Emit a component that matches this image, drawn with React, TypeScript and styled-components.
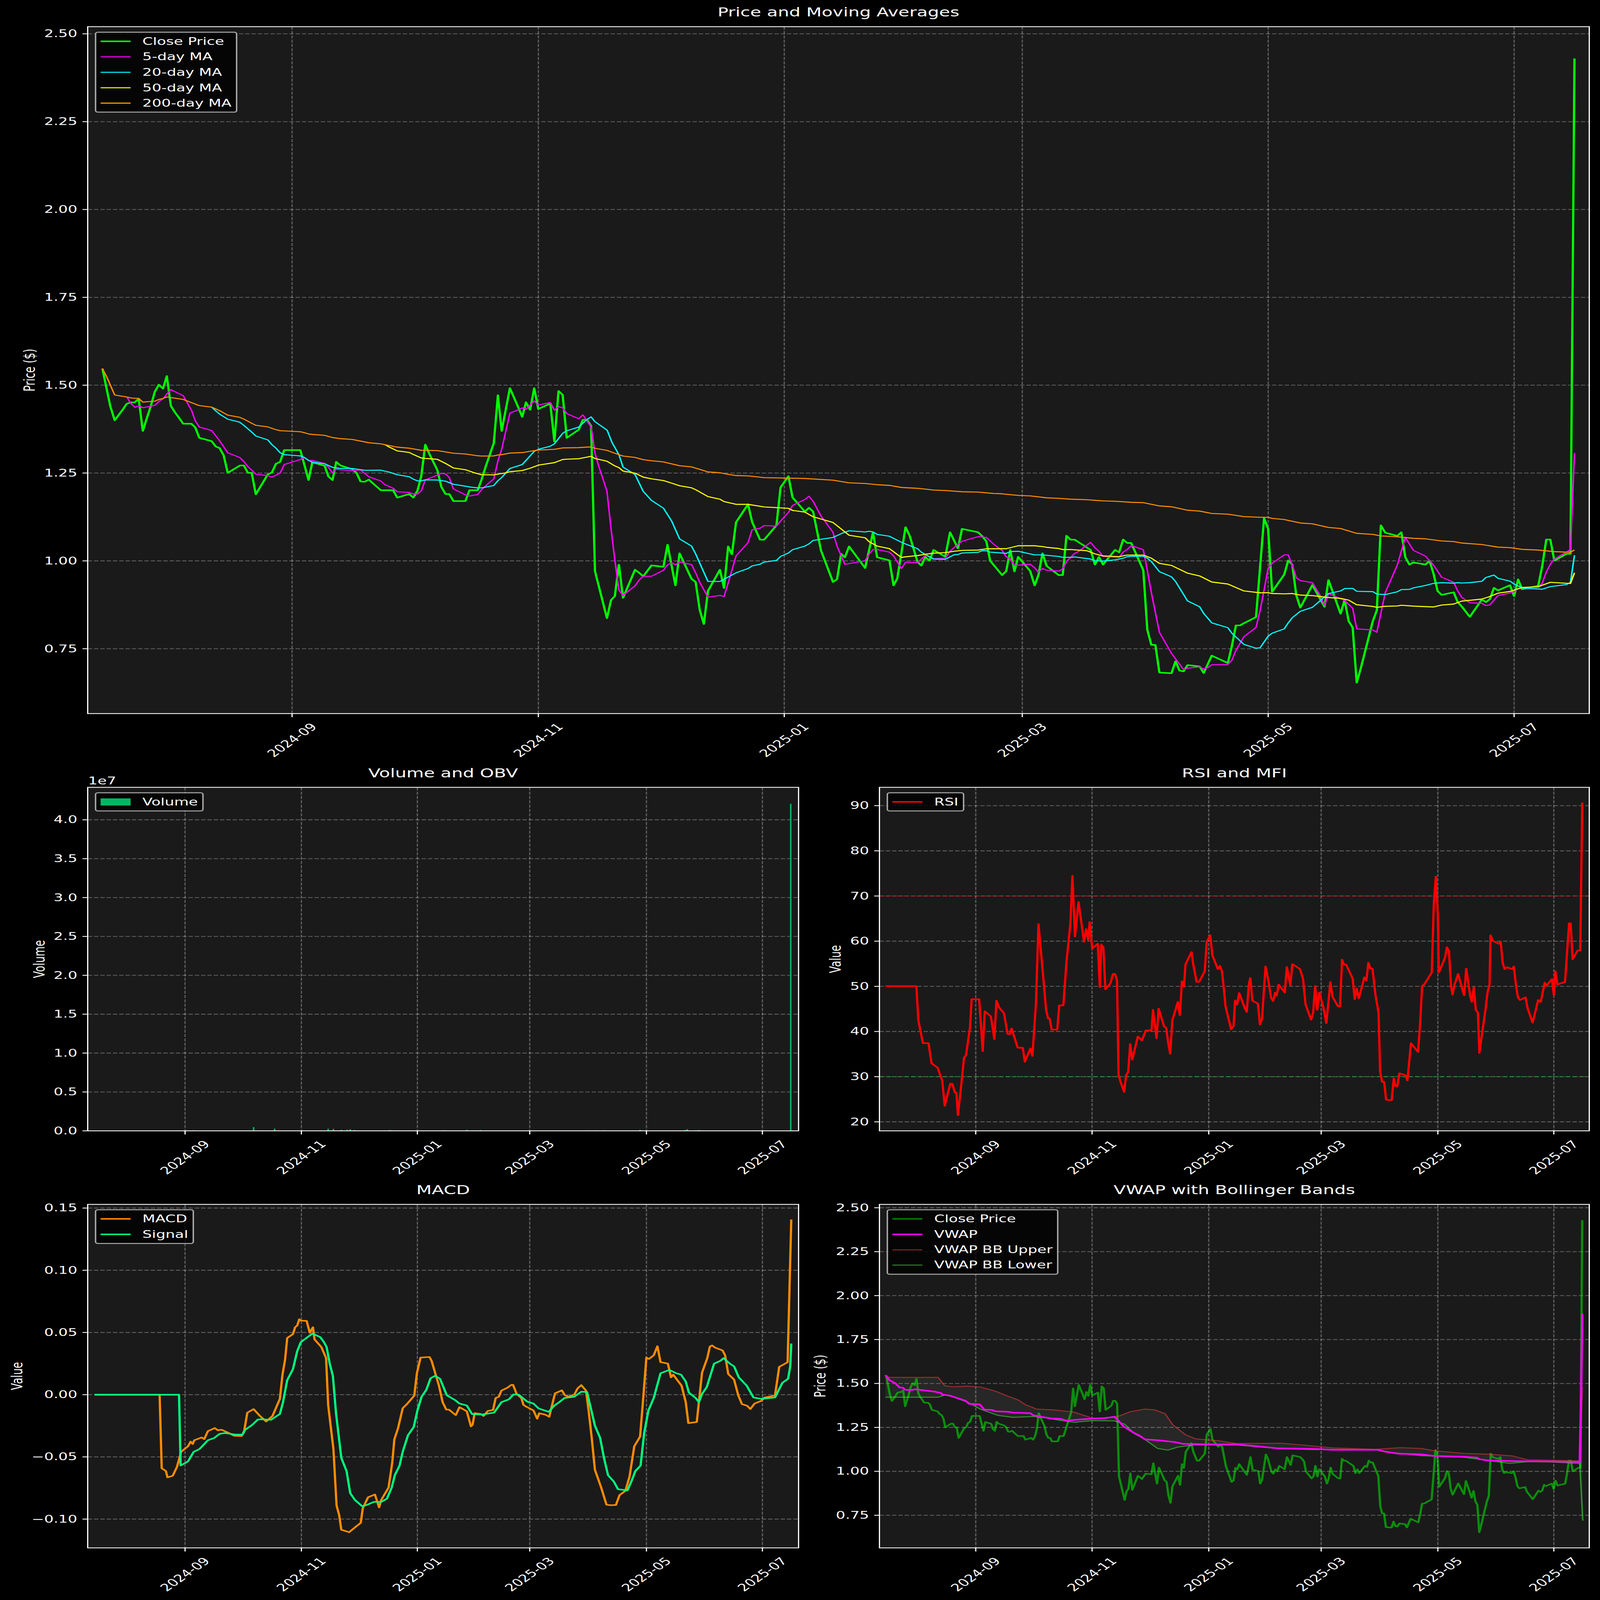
import { ReactNode } from "react";
import styled, { createGlobalStyle } from "styled-components";

type Pt = [number, number];
type Crop = [number, number, number, number];

const GlobalStyle = createGlobalStyle`
  body {
    margin: 0;
    background: #000;
    overflow: hidden;
  }
`;

// series are traced off the chart, "x,y" pairs inside a crop, turned into figure pixels here
const trace = (raw: string, [ox, sx, oy, sy]: Crop): Pt[] =>
  raw
    .trim()
    .split(/\s+/)
    .map((p) => {
      const [x, y] = p.split(",").map(Number);
      return [ox + x / sx, oy + y / sy] as Pt;
    });

const toPoints = (pts: Pt[]) => pts.map(([x, y]) => `${x.toFixed(1)},${y.toFixed(1)}`).join(" ");

const A: Crop = [200, 1.0453, 1400, 1.568];
const B: Crop = [1600, 1.0453, 1800, 1.4255];
const C: Crop = [3000, 1.0667, 1800, 1.4255];
const RSI_CROP: Crop = [2250, 0.7063, 3050, 0.9224];
const MACD_CROP: Crop = [0, 0.6817, 4750, 0.8924];
const VWAP_CROP: Crop = [2250, 0.7063, 4750, 0.8924];

const close = [
  ...trace(
    `90,155 113,395 126,485 150,415 161,380 172,371 184,371 196,348 208,553 220,470 232,390 243,303 255,258 267,283 278,203 290,393 302,435 314,470 326,507 350,507 361,530 373,597 409,618 421,652 432,662 444,708 456,820 492,773 503,773 515,820 526,820 538,957 573,830 585,818 597,762 609,750 621,675 668,675 692,866 703,753 739,775 750,843 762,866 773,750 785,773 820,797 832,820 844,875 856,877 868,863 880,887 903,931 939,931 951,978 986,955 998,978 1010,935 1021,843 1033,640 1045,700 1068,802 1080,910 1092,955 1103,955 1115,1000 1150,1000 1162,931 1186,931 1197,865 1210,775 1233,630 1245,325 1256,553 1280,280 1304,400 1316,463 1327,370 1339,418 1351,280 1363,413 1398,378 1410,620 1422,298 1434,322 1446,597 1481,545 1493,482 1505,482 1517,520`,
    A,
  ),
  ...trace(
    `65,745 100,1018 112,913 123,890 135,708 147,900 182,737 194,755 206,775 230,712 265,720 277,592 300,828 312,642 347,790 359,808 371,970 383,1052 395,860 430,737 442,843 454,602 465,647 477,462 512,358 524,460 547,563 559,563 595,480 607,260 630,195 642,318 678,400 690,378 702,400 725,625 760,808 772,792 784,645 795,665 807,602 854,727 877,520 889,665 925,683 937,828 948,787 972,490 984,540 1007,692 1018,713 1030,663 1042,685 1054,622 1088,662 1102,520 1125,613 1137,500 1184,520 1196,543 1208,572 1219,685 1254,768 1266,745 1278,622 1290,747 1301,662 1336,745 1349,828 1360,768 1372,642 1384,715 1419,768 1431,768 1442,540 1454,563 1466,563`,
    B,
  ),
  ...trace(
    `50,622 63,707 75,663 87,707 123,622 135,636 147,562 159,582 171,582 207,740 219,1085 231,1173 243,1173 255,1333 291,1337 303,1268 315,1322 327,1326 339,1290 375,1298 387,1336 411,1235 459,1278 471,1180 483,1060 495,1060 507,1047 543,1012 567,438 579,500 591,865 627,765 639,683 651,707 663,885 675,957 711,826 747,952 759,797 795,992 807,912 819,1035 831,1072 843,1392 855,1310 891,1035 903,972 915,480 928,522 964,541 976,520 988,665 1000,707 1012,695 1048,707 1060,685 1072,760 1084,860 1096,883 1132,868 1144,925 1156,950 1180,1010 1216,910 1228,925 1240,907 1252,842 1264,857 1300,827 1312,890 1324,793 1336,850 1384,830 1396,715 1408,562 1420,562 1432,685 1468,645 1480,645 1492,-2227`,
    C,
  ),
];

const ma5 = [
  ...trace(
    `162,338 172,375 185,402 197,392 208,405 243,390 255,365 267,348 278,318 290,290 326,328 350,420 361,487 373,528 409,550 432,615 456,692 491,722 503,747 515,782 526,803 538,829 573,838 585,848 609,822 621,767 668,735 680,722 692,741 703,741 739,760 750,785 762,820 773,796 785,801 820,806 844,802 868,845 903,872 915,895 939,918 951,941 986,945 998,955 1010,955 1021,935 1033,865 1068,835 1080,823 1092,827 1103,850 1115,923 1150,960 1162,968 1186,958 1197,928 1221,880 1233,858 1245,745 1256,670 1280,440 1316,406 1327,415 1351,362 1363,388 1398,372 1410,420 1422,398 1434,405 1446,442 1481,475 1493,450 1517,527`,
    A,
  ),
  ...trace(
    `65,60 75,130 100,282 112,500 123,680 135,855 147,886 182,830 194,797 206,775 230,775 265,740 277,708 289,697 300,708 312,693 347,707 359,755 371,810 395,896 430,886 442,892 454,815 477,657 512,580 524,505 547,497 559,481 595,484 607,455 630,405 642,364 678,330 690,311 702,340 725,425 760,520 772,600 795,706 854,685 866,645 877,620 889,620 925,635 937,657 960,730 972,694 1007,696 1030,653 1054,673 1088,670 1102,630 1114,608 1137,572 1184,545 1208,550 1230,590 1254,625 1266,662 1278,675 1290,712 1336,705 1349,725 1360,750 1372,730 1384,740 1419,745 1431,732 1442,690 1466,642`,
    B,
  ),
  ...trace(
    `11,635 50,578 63,610 75,630 87,660 135,665 147,635 159,620 171,597 207,621 219,740 231,870 255,1100 291,1222 327,1316 339,1308 375,1300 387,1313 399,1305 411,1288 459,1286 471,1262 483,1205 507,1125 543,1072 555,975 567,855 579,730 591,700 627,651 639,651 651,710 663,783 675,800 711,812 735,890 747,945 759,875 795,905 807,915 831,960 843,1080 891,1086 903,1100 915,990 928,870 964,710 988,550 1012,625 1048,658 1072,710 1096,780 1132,810 1144,860 1156,897 1180,928 1216,932 1228,945 1240,940 1264,887 1300,872 1312,865 1324,845 1336,840 1384,840 1396,815 1408,750 1420,705 1432,675 1468,635 1480,620 1492,60`,
    C,
  ),
];

const ma20 = [
  ...trace(
    `410,403 421,425 432,445 456,478 491,497 503,517 527,562 538,585 573,610 585,640 597,663 609,692 621,704 668,712 680,722 692,741 703,752 739,762 762,785 785,792 820,792 856,804 903,803 927,815 951,832 986,845 998,860 1010,871 1021,871 1033,865 1068,866 1092,873 1115,893 1150,905 1162,910 1186,916 1197,916 1233,901 1245,870 1256,850 1280,792 1316,767 1351,683 1363,670 1398,650 1410,635 1434,568 1446,552 1481,528 1505,480 1517,463 1528,493 1564,548`,
    A,
  ),
  ...trace(
    `115,0 135,70 147,142 182,185 206,283 230,335 265,380 289,455 312,558 347,600 359,645 395,805 430,805 477,755 512,730 524,715 547,705 559,693 595,683 607,660 630,640 642,621 678,600 690,587 702,567 760,550 784,528 807,511 854,518 866,514 877,518 889,532 925,543 960,578 1007,615 1018,635 1054,675 1088,677 1114,650 1125,649 1137,640 1184,636 1196,627 1208,627 1219,635 1266,642 1278,632 1301,630 1336,645 1349,651 1372,651 1419,660 1431,665 1454,665 1466,663`,
    B,
  ),
  ...trace(
    `50,675 63,685 87,687 123,680 147,670 159,662 171,659 207,659 219,670 231,690 255,748 291,778 303,805 339,918 375,952 387,990 411,1045 459,1073 471,1105 507,1170 543,1192 555,1190 579,1122 591,1105 627,1080 639,1045 651,1015 675,978 711,955 759,875 795,860 807,846 831,845 843,862 891,864 903,878 928,881 964,865 976,852 1000,851 1012,842 1048,828 1072,816 1096,812 1132,815 1144,812 1156,814 1180,812 1216,804 1228,782 1252,768 1264,787 1300,803 1312,820 1336,842 1348,845 1396,850 1420,835 1468,823 1480,810 1492,653`,
    C,
  ),
];

const ma50 = [
  ...trace(
    `915,640 927,655 951,680 986,690 998,703 1021,725 1033,728 1068,734 1092,760 1115,789 1150,800 1174,818 1197,832 1233,833 1245,828 1268,820 1280,813 1316,805 1340,790 1363,771 1410,755 1434,735 1446,733 1481,730 1505,720 1517,714`,
    A,
  ),
  ...trace(
    `65,92 100,108 123,135 135,145 147,165 182,177 206,200 230,210 265,220 289,235 312,250 347,262 359,273 395,313 430,328 442,342 477,358 512,358 559,373 630,381 642,393 678,403 702,430 760,463 807,537 854,552 866,575 889,600 925,615 960,666 972,662 1007,655 1030,647 1054,641 1088,638 1114,630 1137,625 1184,623 1208,616 1266,615 1301,598 1349,598 1372,603 1384,607 1419,614 1431,620 1454,620`,
    B,
  ),
  ...trace(
    `39,627 63,645 87,657 135,661 159,652 207,652 231,670 255,700 291,712 339,757 375,773 411,808 459,820 507,860 555,871 579,870 591,875 627,877 651,875 675,884 711,887 759,898 795,903 819,913 843,940 891,950 903,955 928,949 964,947 976,943 1012,948 1072,953 1096,942 1132,936 1156,919 1216,907 1240,892 1264,873 1300,863 1336,840 1384,835 1420,810 1480,817 1492,755`,
    C,
  ),
];

const ma200 = [
  ...trace(
    `90,155 103,210 126,324 161,336 172,342 184,345 196,345 208,369 243,363 255,352 267,346 278,336 326,352 373,391 409,401 432,423 456,452 491,466 503,477 527,505 538,517 573,527 597,545 609,551 668,558 680,564 692,572 703,575 739,581 762,595 785,602 820,607 868,628 903,635 951,656 986,663 1021,676 1068,678 1115,695 1150,700 1186,711 1197,713 1233,712 1245,706 1256,704 1280,694 1316,691 1351,678 1363,675 1410,670 1434,661 1481,659`,
    A,
  ),
  ...trace(
    `50,25 65,33 100,45 123,62 147,78 182,86 206,99 230,105 265,112 289,123 312,134 347,141 371,155 395,170 430,175 454,184 477,191 512,193 559,203 630,206 678,208 760,218 807,233 854,237 889,244 925,248 960,260 1007,265 1054,275 1088,278 1137,285 1184,287 1230,295 1254,297 1301,306 1336,309 1384,320 1419,323 1454,328`,
    B,
  ),
  ...trace(
    `39,331 87,338 123,340 171,346 207,348 255,367 291,372 339,392 375,397 411,411 459,415 507,429 555,433 579,433 591,439 627,446 675,466 711,471 759,492 795,498 843,526 891,532 915,541 964,546 1012,555 1048,558 1096,570 1132,574 1156,582 1216,591 1264,606 1300,609 1336,619 1384,623 1432,632 1480,636 1492,622`,
    C,
  ),
];

const rsi = trace(
  `158,886 219,886 223,1015 232,1100 243,1100 249,1175 261,1192 270,1240 275,1335 286,1252 290,1252 295,1285 298,1285 301,1370 308,1250 313,1155 317,1145 325,1040 328,935 343,935 350,1130 354,980 366,1000 373,1085 377,940 382,965 392,988 399,1065 403,1067 407,1045 419,1117 429,1117 433,1170 444,1120 448,1148 455,950 460,653 467,800 475,975 479,1007 482,1007 486,1049 497,1049 501,958 509,958 515,800 523,650 527,472 532,700 539,570 547,680 550,720 554,672 558,712 561,645 566,745 577,727 581,890 584,730 588,740 592,898 602,875 607,840 611,840 615,865 618,1220 622,1245 629,1283 633,1220 637,1208 641,1103 645,1162 656,1075 664,1090 672,1052 683,1052 686,975 693,1082 697,970 708,1038 712,1042 716,1100 720,1140 724,1015 735,945 739,995 743,868 747,888 750,805 762,758 765,800 772,870 777,870 788,830 792,720 799,695 803,770 814,822 818,810 822,830 826,900 829,960 840,1048 845,1035 848,940 852,955 856,912 867,968 871,983 875,880 878,855 882,940 893,952 897,1030 901,1010 908,812 914,870 919,930 923,942 927,910 930,922 934,880 946,910 950,814 957,882 961,803 976,822 982,858 987,955 998,1012 1002,985 1006,885 1010,975 1014,910 1022,965 1028,1025 1036,870 1040,925 1051,962 1055,962 1059,787 1063,805 1067,805 1080,858 1084,935 1088,895 1092,932 1103,853 1107,865 1111,798 1115,820 1119,820 1125,920 1131,985 1134,1205 1138,1245 1142,1245 1146,1312 1157,1314 1161,1232 1164,1260 1168,1263 1172,1213 1184,1220 1188,1240 1195,1100 1209,1133 1213,1030 1217,885 1221,880 1236,835 1240,580 1244,475 1248,620 1250,835 1262,780 1266,740 1270,755 1274,885 1277,918 1281,880 1288,840 1296,895 1300,920 1304,820 1312,925 1315,945 1319,890 1323,975 1327,985 1330,1137 1336,1055 1342,975 1346,910 1350,880 1352,695 1356,715 1368,727 1372,718 1376,800 1380,822 1384,815 1395,822 1398,812 1402,880 1406,928 1410,938 1421,928 1425,968 1435,1023 1442,970 1446,938 1451,945 1456,900 1459,873 1462,885 1473,860 1477,920 1480,830 1484,880 1499,870 1503,760 1507,650 1510,650 1514,785 1524,752 1529,752 1533,197`,
  RSI_CROP,
);

const macd = trace(
  `180,823 304,823 308,1090 316,1100 319,1123 329,1117 337,1085 345,1030 358,1010 363,993 367,1002 370,988 384,978 389,984 396,955 409,944 415,952 422,950 436,962 446,972 460,973 465,955 471,888 483,875 495,900 507,920 519,900 533,838 538,750 543,695 547,617 558,603 562,578 566,572 570,549 573,554 584,555 590,598 596,578 599,622 612,650 621,690 625,860 635,1020 641,1225 646,1260 650,1313 665,1322 677,1303 687,1288 691,1235 701,1195 714,1185 722,1232 726,1205 740,1160 747,1070 751,985 758,945 767,872 776,855 789,826 794,745 801,688 818,686 822,700 836,790 843,850 850,877 855,877 868,897 875,868 889,883 897,938 900,932 904,890 916,893 921,900 929,882 939,878 944,835 950,830 955,808 966,798 974,787 977,787 984,820 993,835 997,860 1001,865 1004,868 1016,880 1023,910 1027,890 1038,895 1046,903 1057,818 1070,807 1076,825 1083,830 1094,822 1100,800 1107,788 1116,808 1121,880 1127,980 1133,1095 1145,1160 1155,1222 1163,1224 1173,1223 1180,1187 1191,1172 1199,1120 1208,1010 1219,975 1224,860 1231,688 1236,693 1245,680 1252,647 1258,705 1260,705 1272,710 1278,760 1282,750 1298,790 1306,850 1311,926 1327,922 1337,743 1347,690 1352,648 1356,644 1362,652 1376,662 1381,680 1387,748 1398,768 1406,825 1413,857 1423,863 1429,875 1437,855 1450,845 1456,833 1470,828 1476,825 1484,722 1500,705 1507,187`,
  MACD_CROP,
);

const signal = trace(
  `180,823 341,823 344,1080 358,1065 369,1030 380,1020 396,988 408,980 418,965 428,962 447,967 462,968 467,950 480,933 491,913 500,912 516,914 533,893 539,850 547,770 558,730 566,665 573,632 595,601 610,614 617,632 622,650 628,710 634,755 640,890 650,1052 660,1100 667,1180 676,1205 690,1228 700,1222 712,1212 726,1212 737,1200 746,1160 752,1115 761,1080 767,1030 777,970 788,940 795,880 803,830 812,805 820,763 829,754 838,765 851,825 867,843 875,855 889,862 899,893 917,895 941,888 955,850 969,840 978,822 988,823 1004,848 1016,855 1026,873 1045,885 1056,862 1065,850 1075,835 1094,830 1107,812 1118,813 1125,870 1133,935 1143,980 1150,1050 1158,1115 1169,1138 1177,1166 1195,1170 1203,1135 1210,1100 1220,1080 1227,960 1235,880 1245,835 1258,745 1275,733 1288,745 1297,750 1306,775 1312,815 1325,835 1331,850 1337,820 1346,795 1360,710 1372,700 1378,690 1390,710 1398,720 1407,760 1422,790 1435,833 1450,838 1476,833 1482,810 1490,780 1501,765 1505,720 1507,637`,
  MACD_CROP,
);

const vwap = trace(
  `158,752 166,770 178,782 186,797 192,797 197,805 209,806 218,803 230,806 256,812 268,817 270,822 285,826 300,835 316,845 323,856 344,858 353,877 368,878 375,883 400,885 410,888 444,890 449,897 465,903 485,909 505,911 515,917 540,913 565,910 590,908 610,903 618,918 628,938 645,958 660,972 670,985 695,988 715,992 730,995 745,1001 790,1003 850,1003 880,1008 930,1017 1010,1020 1040,1023 1130,1023 1145,1030 1170,1037 1215,1039 1240,1045 1300,1048 1325,1051 1330,1057 1350,1062 1400,1064 1470,1065 1528,1067 1531,800 1533,528`,
  VWAP_CROP,
);

const bbUpper = trace(
  `158,752 165,760 262,760 275,790 290,794 320,792 345,795 375,810 395,825 420,842 435,860 450,870 455,875 490,878 530,886 565,907 590,908 620,900 640,885 670,875 690,878 710,892 725,932 750,968 770,983 815,990 850,1000 940,999 990,1007 1040,1016 1125,1021 1175,1015 1215,1018 1240,1026 1300,1036 1350,1039 1395,1045 1425,1059 1528,1063 1533,795`,
  VWAP_CROP,
);

const bbLower = trace(
  `158,832 262,832 275,824 290,830 320,850 345,875 380,898 410,905 450,902 475,907 500,915 530,923 565,917 610,918 630,930 650,965 670,985 695,1018 715,1024 735,1013 765,1005 850,1005 930,1018 1000,1022 1125,1023 1160,1033 1215,1044 1300,1050 1340,1060 1390,1072 1425,1066 1470,1067 1528,1072 1534,1280`,
  VWAP_CROP,
);

// same close price, rescaled from the top chart to the VWAP chart
const closeInVwap: Pt[] = close.map(([x, y]) => {
  const day = (x - 816) / 11.27;
  const value = 1.5 - (y - 1566.5) / 1429;
  return [2726 + 5.33 * day, 5983.7 + (1 - value) * 714.6];
});

// [x in crop, height in crop]
const volumeBars: Pt[] = [
  [207, 1], [367, 2], [372, 1], [392, 1], [462, 1], [472, 1], [483, 14], [494, 1], [523, 8], [600, 1], [625, 8], [635, 7],
  [650, 4], [661, 4], [667, 6], [675, 3], [700, 1], [742, 3], [746, 2], [790, 1], [815, 1], [846, 2], [889, 4], [905, 1],
  [915, 3], [930, 1], [955, 1], [975, 1], [1122, 2], [1133, 2], [1150, 2], [1219, 4], [1225, 2], [1270, 1], [1290, 1],
  [1305, 3], [1309, 6], [1325, 2], [1331, 3], [1475, 1],
];

const FONT = `"DejaVu Sans", "Liberation Sans", sans-serif`;
const FIGURE_W = 4470;
const FIGURE_H = 6507;

const Stage = styled.main`
  width: 100vw;
  height: 100vh;
  overflow: hidden;
  background: #000;
`;

const Figure = styled.div`
  width: ${FIGURE_W}px;
  height: ${FIGURE_H}px;
  display: grid;
  grid-template-columns: 2240px 2230px;
  grid-template-rows: 3085px 1660px 1762px;
  transform-origin: 0 0;
  background: #000;
  font-family: ${FONT};
  color: #fff;
`;

const Panel = styled.section<{ $wide?: boolean }>`
  position: relative;
  grid-column: ${(p) => (p.$wide ? "1 / span 2" : "auto")};
`;

const Title = styled.h2<{ $left: number; $right: number; $top: number }>`
  margin: 0;
  padding: ${(p) => `${p.$top}px ${p.$right}px 0 ${p.$left}px`};
  height: 100px;
  line-height: 100px;
  font-size: 50px;
  font-weight: 400;
  text-align: center;
  white-space: nowrap;
`;

const ChartSvg = styled.svg`
  display: block;
  overflow: visible;
  font-family: ${FONT};
  font-size: 41.67px;
`;

const TickLabel = styled.text`
  fill: #fff;
  dominant-baseline: central;
`;

const Legend = styled.div<{ $left: number; $top: number }>`
  position: absolute;
  left: ${(p) => p.$left}px;
  top: ${(p) => p.$top}px;
  display: flex;
  flex-direction: column;
  gap: 20.8px;
  padding: 14px 12.5px;
  background: rgba(0, 0, 0, 0.8);
  border: 4.17px solid #aaa;
  border-radius: 8.3px;
  font-size: 41.67px;
`;

const LegendRow = styled.div`
  display: flex;
  align-items: center;
  gap: 33.3px;
  height: 42px;
  line-height: 42px;
  white-space: nowrap;
`;

const Swatch = styled.span<{ $color: string; $size: number }>`
  width: 83.3px;
  height: ${(p) => p.$size}px;
  background: ${(p) => p.$color};
`;

type Axes = { left: number; right: number; top: number; bottom: number };
type Tick = [number, string];

const XLABELS = ["2024-09", "2024-11", "2025-01", "2025-03", "2025-05", "2025-07"];
const xTicks = (positions: number[]): Tick[] => positions.map((x, i) => [x, XLABELS[i]]);

const yRange = (from: number, step: number, count: number, decimals: number, at: (v: number) => number): Tick[] =>
  Array.from({ length: count }, (_, i) => {
    const v = from + step * i;
    return [at(v), v.toFixed(decimals).replace("-", "\u2212")] as Tick;
  });

const GRID = { stroke: "#fff", strokeOpacity: 0.3, strokeWidth: 3.33, strokeDasharray: "12.3 5.3" };

function Chart(props: {
  x: number;
  y: number;
  w: number;
  h: number;
  axes: Axes;
  xticks: Tick[];
  yticks: Tick[];
  ylabel: string;
  ylabelX: number;
  children: ReactNode;
}) {
  const { x, y, w, h, axes, xticks, yticks, ylabel, ylabelX, children } = props;
  const midY = (axes.top + axes.bottom) / 2;
  return (
    <ChartSvg width={w} height={h} viewBox={`${x} ${y} ${w} ${h}`}>
      <rect x={axes.left} y={axes.top} width={axes.right - axes.left} height={axes.bottom - axes.top} fill="#1a1a1a" />
      {xticks.map(([tx]) => (
        <line key={tx} x1={tx} x2={tx} y1={axes.top} y2={axes.bottom} {...GRID} />
      ))}
      {yticks.map(([ty]) => (
        <line key={ty} x1={axes.left} x2={axes.right} y1={ty} y2={ty} {...GRID} />
      ))}
      {children}
      <rect
        x={axes.left}
        y={axes.top}
        width={axes.right - axes.left}
        height={axes.bottom - axes.top}
        fill="none"
        stroke="#fff"
        strokeWidth={3.33}
      />
      {xticks.map(([tx, label]) => (
        <g key={label}>
          <line x1={tx} x2={tx} y1={axes.bottom} y2={axes.bottom + 14.6} stroke="#fff" strokeWidth={3.33} />
          <TickLabel textAnchor="middle" transform={`translate(${tx} ${axes.bottom + 108}) rotate(-45)`}>
            {label}
          </TickLabel>
        </g>
      ))}
      {yticks.map(([ty, label]) => (
        <g key={label}>
          <line x1={axes.left - 14.6} x2={axes.left} y1={ty} y2={ty} stroke="#fff" strokeWidth={3.33} />
          <TickLabel x={axes.left - 29} y={ty} textAnchor="end">
            {label}
          </TickLabel>
        </g>
      ))}
      <TickLabel textAnchor="middle" transform={`translate(${ylabelX} ${midY}) rotate(-90)`}>
        {ylabel}
      </TickLabel>
    </ChartSvg>
  );
}

function Line(props: { pts: Pt[]; color: string; width?: number; opacity?: number }) {
  return (
    <polyline
      points={toPoints(props.pts)}
      fill="none"
      stroke={props.color}
      strokeWidth={props.width ?? 6.25}
      strokeOpacity={props.opacity ?? 1}
      strokeLinejoin="round"
    />
  );
}

const mainAxes: Axes = { left: 245, right: 4440, top: 108.5, bottom: 2902 };
const volAxes: Axes = { left: 245, right: 2231, top: 3202, bottom: 4599 };
const rsiAxes: Axes = { left: 2457, right: 4440, top: 3202, bottom: 4599 };
const macdAxes: Axes = { left: 245, right: 2231, top: 4898, bottom: 6295 };
const vwapAxes: Axes = { left: 2457, right: 4440, top: 4898, bottom: 6295 };

const mainX = xTicks([816, 1504, 2191, 2856, 3543, 4230]);
const leftX = xTicks([517, 842, 1166, 1480, 1806, 2130]);
const rightX = xTicks([2726, 3051, 3377, 3691, 4017, 4341]);

const priceMainY = yRange(0.75, 0.25, 8, 2, (v) => 1566.5 + (1.5 - v) * 1429);
const volumeY = yRange(0, 0.5, 9, 1, (v) => 4599 - v * 316.25);
const rsiAt = (v: number) => 4562.4 - (v - 20) * 18.37;
const rsiY = yRange(20, 10, 8, 0, rsiAt);
const macdY = yRange(-0.1, 0.05, 6, 2, (v) => 5672 - v * 5060);
const vwapY = yRange(0.75, 0.25, 8, 2, (v) => 5983.7 + (1 - v) * 714.6);

const MAIN_LEGEND: [string, string, number][] = [
  ["Close Price", "#00ff00", 6.25],
  ["5-day MA", "#ff00ff", 4.17],
  ["20-day MA", "#00ffff", 4.17],
  ["50-day MA", "#ffff00", 4.17],
  ["200-day MA", "#ff8c00", 4.17],
];

const VWAP_LEGEND: [string, string, number][] = [
  ["Close Price", "#008000", 6.25],
  ["VWAP", "#ff00ff", 6.25],
  ["VWAP BB Upper", "#7f2a2a", 4.17],
  ["VWAP BB Lower", "#2a872a", 4.17],
];

function LegendBox(props: { left: number; top: number; items: [string, string, number][] }) {
  return (
    <Legend $left={props.left} $top={props.top}>
      {props.items.map(([label, color, size]) => (
        <LegendRow key={label}>
          <Swatch $color={color} $size={size} />
          {label}
        </LegendRow>
      ))}
    </Legend>
  );
}

export default function App() {
  // the figure is drawn at its native size and fitted to the window it actually gets
  const fit = `scale(${window.innerWidth / FIGURE_W}, ${window.innerHeight / FIGURE_H})`;
  return (
    <Stage>
      <GlobalStyle />
      <Figure style={{ transform: fit }}>
        <Panel $wide>
          <Title $left={245} $right={30} $top={0}>
            Price and Moving Averages
          </Title>
          <Chart x={0} y={100} w={4470} h={2985} axes={mainAxes} xticks={mainX} yticks={priceMainY} ylabel="Price ($)" ylabelX={83}>
            <Line pts={close} color="#00ff00" />
            <Line pts={ma5} color="#ff00ff" width={4.17} />
            <Line pts={ma20} color="#00ffff" width={4.17} />
            <Line pts={ma50} color="#ffff00" width={4.17} />
            <Line pts={ma200} color="#ff8c00" width={4.17} />
          </Chart>
          <LegendBox left={264.8} top={129.3} items={MAIN_LEGEND} />
        </Panel>

        <Panel>
          <Title $left={245} $right={9} $top={10}>
            Volume and OBV
          </Title>
          <Chart x={0} y={3195} w={2240} h={1550} axes={volAxes} xticks={leftX} yticks={volumeY} ylabel="Volume" ylabelX={110}>
            {volumeBars.map(([bx, bh]) => (
              <rect key={bx} x={bx / 0.6817 - 2.1} y={4599 - bh / 0.9224} width={4.2} height={bh / 0.9224} fill="#00b862" />
            ))}
            <rect x={2207} y={3269} width={4.2} height={1330} fill="#00b862" />
            <TickLabel x={246} y={3176}>
              1e7
            </TickLabel>
          </Chart>
          <LegendBox left={264.8} top={137} items={[["Volume", "#00b862", 29]]} />
        </Panel>

        <Panel>
          <Title $left={217} $right={30} $top={10}>
            RSI and MFI
          </Title>
          <Chart x={2240} y={3195} w={2230} h={1550} axes={rsiAxes} xticks={rightX} yticks={rsiY} ylabel="Value" ylabelX={2335}>
            <line x1={2457} x2={4440} y1={rsiAt(70)} y2={rsiAt(70)} stroke="#ff0000" strokeOpacity={0.5} strokeWidth={4.17} strokeDasharray="15.4 6.6" />
            <line x1={2457} x2={4440} y1={rsiAt(30)} y2={rsiAt(30)} stroke="#00ff00" strokeOpacity={0.3} strokeWidth={4.17} strokeDasharray="15.4 6.6" />
            <Line pts={rsi} color="#ff0000" />
          </Chart>
          <LegendBox left={236.8} top={137} items={[["RSI", "#ff0000", 6.25]]} />
        </Panel>

        <Panel>
          <Title $left={245} $right={9} $top={45}>
            MACD
          </Title>
          <Chart x={0} y={4890} w={2240} h={1617} axes={macdAxes} xticks={leftX} yticks={macdY} ylabel="Value" ylabelX={48}>
            <Line pts={macd} color="#ff8c00" />
            <Line pts={signal} color="#00ff7f" />
          </Chart>
          <LegendBox
            left={264.8}
            top={173}
            items={[
              ["MACD", "#ff8c00", 6.25],
              ["Signal", "#00ff7f", 6.25],
            ]}
          />
        </Panel>

        <Panel>
          <Title $left={217} $right={30} $top={45}>
            VWAP with Bollinger Bands
          </Title>
          <Chart x={2240} y={4890} w={2230} h={1617} axes={vwapAxes} xticks={rightX} yticks={vwapY} ylabel="Price ($)" ylabelX={2292}>
            <polygon points={toPoints([...bbUpper, ...[...bbLower].reverse()])} fill="#fff" fillOpacity={0.06} />
            <Line pts={closeInVwap} color="#00ff00" opacity={0.5} />
            <Line pts={bbUpper} color="#ff3b3b" width={4.17} opacity={0.5} />
            <Line pts={bbLower} color="#3bff3b" width={4.17} opacity={0.5} />
            <Line pts={vwap} color="#ff00ff" />
          </Chart>
          <LegendBox left={236.8} top={173} items={VWAP_LEGEND} />
        </Panel>
      </Figure>
    </Stage>
  );
}
